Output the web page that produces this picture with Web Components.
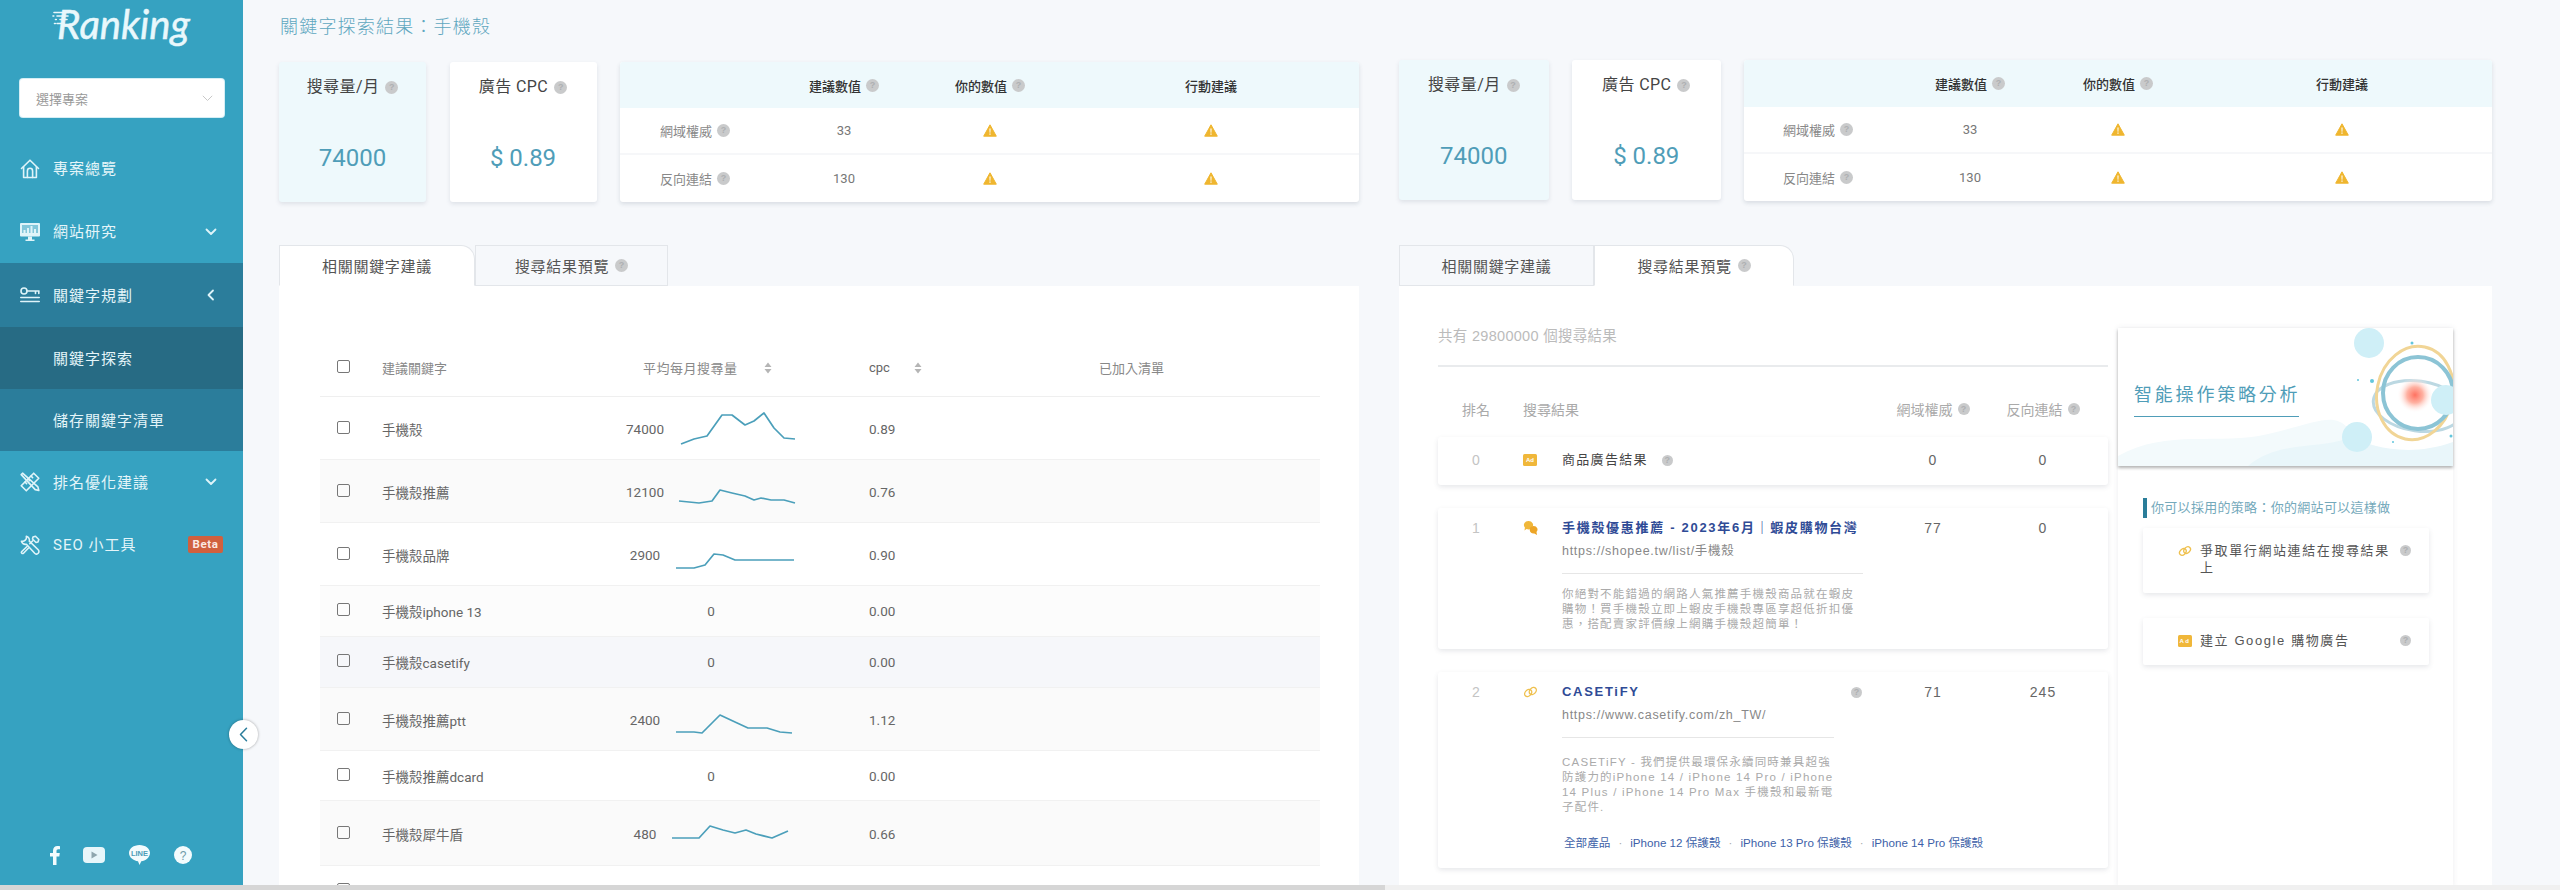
<!DOCTYPE html>
<html lang="zh-Hant">
<head>
<meta charset="utf-8">
<title>關鍵字探索</title>
<style>
  html,body{margin:0;padding:0;height:890px;overflow:hidden;background:#f6f8fb;}
  body{font-family:Roboto,"Noto Sans CJK TC",sans-serif;color:#666;}
</style>
</head>
<body>
<seo-app>
  <seo-sidebar slot="side"></seo-sidebar>

  <report-col>
    <page-title slot="head">關鍵字探索結果：手機殼</page-title>
    <stat-row slot="stats" style="--card:147px;--gap:23.5px">
      <stat-card tone="blue" label="搜尋量/月" value="74000"></stat-card>
      <stat-card label="廣告 CPC" value="$ 0.89"></stat-card>
      <metric-table style="--cols:170px 108px 184px 258px 1fr;--left:40px;--top:46px;--row:47px"></metric-table>
    </stat-row>
    <tab-bar slot="tabs">
      <tab-item active wide="196">相關關鍵字建議</tab-item>
      <tab-item help wide="193">搜尋結果預覽</tab-item>
    </tab-bar>
    <keyword-table slot="body">
      <keyword-row kw="手機殼" vol="74000" cpc="0.89" h="63" spark="9,47 22,42 35,39 50,18 60,18 73,28 82,24 92,16 102,31 112,41 123,42"></keyword-row>
      <keyword-row kw="手機殼推薦" vol="12100" cpc="0.76" h="63" bg="#fafafa" spark="7,41 27,43 40,41 48,30 60,33 73,36 82,40 89,38 99,40 112,40 123,43"></keyword-row>
      <keyword-row kw="手機殼品牌" vol="2900" cpc="0.90" h="63" spark="4,45 22,45 33,42 42,31 51,32 63,37 122,37"></keyword-row>
      <keyword-row kw="手機殼iphone 13" vol="0" cpc="0.00" h="51" bg="#fcfcfc"></keyword-row>
      <keyword-row kw="手機殼casetify" vol="0" cpc="0.00" h="51" bg="#f6f7fa"></keyword-row>
      <keyword-row kw="手機殼推薦ptt" vol="2400" cpc="1.12" h="63" bg="#fafafa" spark="4,44 22,44 30,45 40,35 48,27 63,34 76,40 95,40 108,44 120,45"></keyword-row>
      <keyword-row kw="手機殼推薦dcard" vol="0" cpc="0.00" h="50"></keyword-row>
      <keyword-row kw="手機殼犀牛盾" vol="480" cpc="0.66" h="65" bg="#fafafa" spark="0,37 27,37 38,25 51,29 63,32 74,29 84,33 100,37 116,30"></keyword-row>
      <keyword-row kw="手機殼推薦2023" h="50"></keyword-row>
    </keyword-table>
  </report-col>

  <report-col style="--col:1093px;--pad:60px;--tab-gap:44px">
    <stat-row slot="stats" style="--card:149.5px;--gap:23px">
      <stat-card tone="blue" label="搜尋量/月" value="74000"></stat-card>
      <stat-card label="廣告 CPC" value="$ 0.89"></stat-card>
      <metric-table style="--cols:172px 108px 188px 260px 1fr;--left:39px;--top:47px;--row:47px"></metric-table>
    </stat-row>
    <tab-bar slot="tabs">
      <tab-item wide="195">相關關鍵字建議</tab-item>
      <tab-item active help wide="200">搜尋結果預覽</tab-item>
    </tab-bar>
    <serp-panel slot="body">
      <serp-row slot="rows" rank="0" icon="ad" da="0" bl="0" top="13" style="--h:48px">
        <strong-label slot="title">商品廣告結果</strong-label>
      </serp-row>
      <serp-row slot="rows" rank="1" icon="chat" da="77" bl="0" style="--h:141px;--rule:301px;--desc-gap:13px">
        <span slot="title">手機殼優惠推薦 - 2023年6月｜蝦皮購物台灣</span>
        <span slot="url">https://shopee.tw/list/手機殼</span>
        <span slot="desc">你絕對不能錯過的網路人氣推薦手機殼商品就在蝦皮<br>購物！買手機殼立即上蝦皮手機殼專區享超低折扣優<br>惠，搭配賣家評價線上網購手機殼超簡單！</span>
      </serp-row>
      <serp-row slot="rows" rank="2" icon="link" da="71" bl="245" help style="--h:196px;--rule:272px;--desc-gap:17px">
        <span slot="title">CASETiFY</span>
        <span slot="url">https://www.casetify.com/zh_TW/</span>
        <span slot="desc">CASETiFY - 我們提供最環保永續同時兼具超強<br>防護力的iPhone 14 / iPhone 14 Pro / iPhone<br>14 Plus / iPhone 14 Pro Max 手機殼和最新電<br>子配件.</span>
        <span slot="links">全部產品</span><span slot="links" class="sep">·</span><span slot="links">iPhone 12 保護殼</span><span slot="links" class="sep">·</span><span slot="links">iPhone 13 Pro 保護殼</span><span slot="links" class="sep">·</span><span slot="links">iPhone 14 Pro 保護殼</span>
      </serp-row>
      <strategy-panel slot="side">
        <strategy-item icon="link" style="--h:65px">爭取單行網站連結在搜尋結果上</strategy-item>
        <strategy-item icon="ad" style="--h:47px">建立 Google 購物廣告</strategy-item>
      </strategy-panel>
    </serp-panel>
  </report-col>
</seo-app>

<script>
const STROKE = 'fill="none" stroke="#dff4f9" stroke-width="1.6" stroke-linecap="round" stroke-linejoin="round"';
const ICONS = {
  home:`<svg width="20" height="20" viewBox="0 0 20 20" ${STROKE}><path d="M1.5 9.5 10 1.2l8.5 8.3"/><path d="M3.6 7.8v10.7h12.8V7.8"/><path d="M7.4 18.5v-6.6a2.6 2.6 0 0 1 5.2 0v6.6"/></svg>`,
  monitor:`<svg width="20" height="20" viewBox="0 0 20 20"><path fill="#dff4f9" d="M1 1h18a1 1 0 0 1 1 1v11.5a1 1 0 0 1-1 1H1a1 1 0 0 1-1-1V2a1 1 0 0 1 1-1z"/><path fill="#36a2c1" d="M2 3h16v8H2z" opacity=".55"/><path fill="#dff4f9" d="M3.5 8h2v3h-2zM7 6h2v5H7zM10.5 4h2v7h-2zM14 7h2v4h-2z"/><path fill="#dff4f9" d="M8 14.5h4v3h2.5V19h-9v-1.5H8z"/></svg>`,
  key:`<svg width="20" height="16" viewBox="0 0 20 16" ${STROKE}><circle cx="4" cy="4" r="3"/><path d="M7 4h12M15.5 4v2.400M18.800 4v2.400M.8 10.500h18.400M.8 14.500h18.400"/></svg>`,
  tools:`<svg width="20" height="20" viewBox="0 0 20 20" ${STROKE}><path d="M2.600 1.200 1.200 2.600l14 15 3.600.9-.9-3.600z"/><path d="M13.700 1.200 18.800 6.300 6.300 18.800 1.200 13.700z"/><path d="M11 4l1.600 1.600M8 7l1.600 1.600M5 10l1.600 1.600"/></svg>`,
  wrench:`<svg width="20" height="20" viewBox="0 0 20 20" ${STROKE}><path d="M6.300 1.300a4 4 0 0 1-4.900 4.900 4 4 0 0 0 5 3l8.300 9.100a2.400 2.400 0 0 0 3.500-3.500L9.300 6.200a4 4 0 0 0-3-4.900z"/><path d="M13 2l2.500-.8 3.300 3.300-.8 2.500-2 .5-3.500-3.500z"/><path d="M12.700 5.800 9.800 8.700M7 11.500l-5.200 5a1.200 1.200 0 0 0 1.700 1.700l5-5.200"/></svg>`,
  chevDown:`<svg width="12" height="8" viewBox="0 0 12 8" fill="none" stroke="#dff4f9" stroke-width="1.800" stroke-linecap="round" stroke-linejoin="round"><path d="M1.500 1.500 6 6l4.500-4.500"/></svg>`,
  chevLeft:`<svg width="8" height="12" viewBox="0 0 8 12" fill="none" stroke="#dff4f9" stroke-width="1.800" stroke-linecap="round" stroke-linejoin="round"><path d="M6 1.500 1.500 6 6 10.500"/></svg>`,
  ad:`<svg width="14" height="12" viewBox="0 0 14 12"><rect width="14" height="12" rx="1.500" fill="#f0b73a"/><text x="7" y="8.200" font-size="6" font-weight="700" text-anchor="middle" fill="#fff" font-family="Liberation Sans">Ad</text></svg>`,
  chat:`<svg width="16" height="16" viewBox="0 0 16 16"><path fill="#f0b73a" d="M5.500 1a4.500 4 0 0 1 3.600 6.500A4.500 4 0 0 1 3.500 9L1.500 10.500l.400-3A4.500 4 0 0 1 5.500 1z"/><path fill="#eda526" d="M10.500 6a4 3.600 0 0 1 3 6.100l.500 2.900-2.700-1.500a4 3.600 0 0 1-.800-7.500z"/></svg>`,
  link:`<svg width="15" height="14" viewBox="0 0 15 14" fill="none" stroke="#efc04e" stroke-width="1.400"><ellipse cx="5.200" cy="8" rx="4" ry="3" transform="rotate(-45 5.200 8)"/><ellipse cx="9.800" cy="6" rx="4" ry="3" transform="rotate(-45 9.800 6)"/></svg>`
};

class SeoApp extends HTMLElement {
  constructor() {
    super();
    this.attachShadow({ mode: 'open' }).innerHTML = `
      <style>
        :host{display:flex;flex-direction:column;height:890px;width:2560px;overflow:hidden;}
        .page{flex:1;display:flex;min-height:0;overflow:hidden;}
        .cols{flex:1;display:flex;gap:40px;padding-left:36px;min-width:0;}
        .bar{height:5px;flex:none;display:flex;}
        .bar b{width:1385px;background:#d6d6d6;}
        .bar i{flex:1;background:#f0f0f0;}
      </style>
      <div class="page">
        <slot name="side"></slot>
        <div class="cols"><slot></slot></div>
      </div>
      <div class="bar"><b></b><i></i></div>`;
  }
}

class SeoSidebar extends HTMLElement {
  constructor() {
    super();
    this.attachShadow({ mode: 'open' }).innerHTML = `
      <style>
        :host{display:flex;flex-direction:column;flex:none;width:243px;background:#36a2c1;position:relative;}
        .logo{height:79px;box-sizing:border-box;padding:1px 0 0 57px;display:flex;position:relative;
          font:italic 400 40px/46px Lato,sans-serif;color:#e9f8fc;-webkit-text-stroke:.5px #e9f8fc;}
        .logo svg{position:absolute;left:52px;top:11px;}
        .select{height:38px;margin:0 19px 20px 20px;background:#fff;border-radius:3px;display:flex;align-items:center;
          justify-content:space-between;padding:0 11px 0 16px;font-size:13px;color:#999;box-shadow:0 0 0 1px #d5eef5;}
        .menu{display:flex;flex-direction:column;}
        .foot{margin-top:auto;display:flex;align-items:center;padding:0 0 18px 50px;height:24px;}
        .collapse{position:absolute;right:-14.500px;top:720px;width:29px;height:29px;border-radius:50%;background:#fff;
          box-shadow:0 0 3px rgba(0,0,0,.35);display:flex;align-items:center;justify-content:center;}
      </style>
      <div class="logo">
        <svg width="18" height="24" viewBox="0 0 18 24" fill="none" stroke="#e9f8fc" stroke-width="1.600" stroke-linecap="round"><path d="M2 1.500h15M5 5h11M8 8.500h7"/><path d="M1 5h.8M3.500 8.500h.8M2.500 12.500h.8M5 12.500h7"/></svg>
        <span>Ranking</span>
      </div>
      <div class="select"><span>選擇專案</span>
        <svg width="11" height="7" viewBox="0 0 11 7" fill="none" stroke="#c8c8c8" stroke-width="1"><path d="M.8.800 5.500 5.500 10.200.800"/></svg>
      </div>
      <div class="menu">
        <side-item icon="home">專案總覽</side-item>
        <side-item icon="monitor" arrow="down">網站研究</side-item>
        <side-item icon="key" arrow="left" tone="open" h="64">關鍵字規劃</side-item>
        <side-item tone="current" h="62">關鍵字探索</side-item>
        <side-item tone="open" h="62">儲存關鍵字清單</side-item>
        <side-item icon="tools" arrow="down" h="62">排名優化建議</side-item>
        <side-item icon="wrench" badge="Beta">SEO 小工具</side-item>
      </div>
      <div class="foot">
        <svg width="10" height="19" viewBox="0 0 10 19" fill="#f3fbfd"><path d="M3 19V10.500H0V7h3V4.700C3 1.700 4.800 0 7.400 0 8.600 0 10 .2 10 .2v3H8.400C6.900 3.200 6.500 4.100 6.500 5V7h3.300l-.5 3.500H6.500V19z"/></svg>
        <svg style="margin-left:23px" width="22" height="16" viewBox="0 0 22 16"><rect width="22" height="16" rx="4" fill="#e8f6fa"/><path d="M8.500 4.500 14.500 8l-6 3.500z" fill="#8fa6ae"/></svg>
        <svg style="margin-left:24px" width="21" height="20" viewBox="0 0 21 20"><path fill="#f3fbfd" d="M10.500 0C16.300 0 21 3.600 21 8s-4.700 8-8.700 8.300L10.500 20 9 16.200C4.500 15.800 0 12.400 0 8s4.700-8 10.500-8z"/><text x="10.500" y="10.700" text-anchor="middle" font-size="7.500" font-weight="700" fill="#4d9db8" font-family="Liberation Sans">LINE</text></svg>
        <svg style="margin-left:24px" width="18" height="18" viewBox="0 0 18 18"><circle cx="9" cy="9" r="9" fill="#f3fbfd"/><text x="9" y="13.500" text-anchor="middle" font-size="12" fill="#6f9aa8" font-family="Liberation Sans">?</text></svg>
      </div>
      <div class="collapse">
        <svg width="9" height="15" viewBox="0 0 9 15" fill="none" stroke="#2b7d9b" stroke-width="1.500" stroke-linecap="round" stroke-linejoin="round"><path d="M7.500 1.200 1.500 7.500l6 6.300"/></svg>
      </div>`;
  }
}

class SideItem extends HTMLElement {
  connectedCallback() {
    const icon = this.getAttribute('icon'), arrow = this.getAttribute('arrow'), badge = this.getAttribute('badge');
    const tone = this.getAttribute('tone');
    const bg = tone === 'open' ? '#2b7d9b' : tone === 'current' ? '#276b84' : 'transparent';
    this.attachShadow({ mode: 'open' }).innerHTML = `
      <style>
        :host{display:flex;align-items:center;height:${this.getAttribute('h') || 63}px;box-sizing:border-box;padding:0 20px;background:${bg};
          font-size:15px;letter-spacing:1px;color:#e4f5f9;}
        .ic{width:20px;margin-right:13px;flex:none;display:flex;justify-content:center;}
        .txt{flex:1;white-space:nowrap;margin-top:-2px;}
        .arrow{width:12px;margin-right:6px;display:flex;justify-content:center;}
        .badge{background:#d0603e;color:#fbe9e2;font:700 11.500px/17px Roboto,sans-serif;letter-spacing:.6px;
          width:35px;text-align:center;border-radius:2px;margin-right:0;}
      </style>
      <span class="ic">${icon ? ICONS[icon] : ''}</span>
      <span class="txt"><slot></slot></span>
      ${arrow ? `<span class="arrow">${arrow === 'down' ? ICONS.chevDown : ICONS.chevLeft}</span>` : ''}
      ${badge ? `<span class="badge">${badge}</span>` : ''}`;
  }
}

class ReportCol extends HTMLElement {
  constructor() {
    super();
    this.attachShadow({ mode: 'open' }).innerHTML = `
      <style>
        :host{display:flex;flex-direction:column;flex:none;width:var(--col,1080px);padding-top:var(--pad,0);box-sizing:border-box;min-height:0;}
        .tabs{margin-top:var(--tab-gap,43px);}
        .body{flex:1;background:#fff;min-height:0;overflow:hidden;}
      </style>
      <slot name="head"></slot>
      <slot name="stats"></slot>
      <div class="tabs"><slot name="tabs"></slot></div>
      <div class="body"><slot name="body"></slot></div>`;
  }
}

class PageTitle extends HTMLElement {
  constructor() {
    super();
    this.attachShadow({ mode: 'open' }).innerHTML = `
      <style>
        :host{display:block;height:62px;box-sizing:border-box;padding-left:1px;padding-top:14px;
          font-size:18px;line-height:26px;letter-spacing:1.200px;color:#5fa7bf;font-weight:300;}
      </style><slot></slot>`;
  }
}

class StatRow extends HTMLElement {
  constructor() {
    super();
    this.attachShadow({ mode: 'open' }).innerHTML = `
      <style>
        :host{display:grid;grid-template-columns:var(--card) var(--card) 1fr;column-gap:var(--gap);}
      </style><slot></slot>`;
  }
}

class HelpDot extends HTMLElement {
  constructor() {
    super();
    this.attachShadow({ mode: 'open' }).innerHTML = `
      <style>
        :host{display:inline-flex;align-items:center;justify-content:center;width:var(--dot,13px);height:var(--dot,13px);
          border-radius:50%;background:#c9cacb;color:#aeb0b2;font:700 9px/1 "Liberation Sans",sans-serif;flex:none;letter-spacing:0;}
      </style>?`;
  }
}

class StatCard extends HTMLElement {
  connectedCallback() {
    const blue = this.getAttribute('tone') === 'blue';
    this.attachShadow({ mode: 'open' }).innerHTML = `
      <style>
        :host{display:flex;flex-direction:column;align-items:center;height:140px;border-radius:3px;
          background:${blue ? '#eef9fc' : '#fff'};box-shadow:0 2px 4px rgba(60,80,100,.13);}
        .label{margin-top:14px;height:22px;display:flex;align-items:center;gap:6px;font-size:16px;line-height:22px;letter-spacing:.4px;color:#444;white-space:nowrap;}
        .value{margin-top:43px;font-size:24px;line-height:34px;color:#4f9db8;}
      </style>
      <div class="label">${this.getAttribute('label')}<help-dot></help-dot></div>
      <div class="value">${this.getAttribute('value')}</div>`;
  }
}

class WarnIcon extends HTMLElement {
  constructor() {
    super();
    this.attachShadow({ mode: 'open' }).innerHTML = `
      <style>:host{display:inline-flex;}</style>
      <svg width="14" height="13" viewBox="0 0 14 13"><path d="M7 .8 13.300 12.200H.7z" fill="#efb62f" stroke="#efb62f" stroke-linejoin="round"/><path d="M6.400 4.500h1.200l-.2 4.300h-.8zM6.400 9.600h1.200v1.200H6.400z" fill="#fff"/></svg>`;
  }
}

class MetricTable extends HTMLElement {
  constructor() {
    super();
    const row = (label, num) => `
      <div class="row"><span class="name">${label}<help-dot></help-dot></span><span class="num">${num}</span>
      <span><warn-icon></warn-icon></span><span><warn-icon></warn-icon></span><span></span></div>`;
    this.attachShadow({ mode: 'open' }).innerHTML = `
      <style>
        :host{display:block;align-self:start;background:#fff;border-radius:3px;box-shadow:0 2px 4px rgba(60,80,100,.16);overflow:hidden;}
        .row{display:grid;grid-template-columns:var(--cols);align-items:center;height:var(--row);font-size:13px;text-align:center;color:#777;box-sizing:border-box;border-bottom:2px solid #f6f7f9;}
        .row:last-child{border-bottom:0;}
        .head{height:var(--top);background:#eef9fc;color:#333;font-weight:500;border:0;}
        .head span{display:flex;align-items:center;justify-content:center;gap:5px;}
        .name{display:flex;align-items:center;gap:5px;padding-left:var(--left);color:#888;}
        .row span{display:flex;justify-content:center;}
        .row .name{justify-content:flex-start;}
      </style>
      <div class="row head"><span></span><span>建議數值<help-dot></help-dot></span><span>你的數值<help-dot></help-dot></span><span>行動建議</span><span></span></div>
      ${row('網域權威', 33)}${row('反向連結', 130)}`;
  }
}

class TabBar extends HTMLElement {
  constructor() {
    super();
    this.attachShadow({ mode: 'open' }).innerHTML = `
      <style>:host{display:flex;height:41px;}</style><slot></slot>`;
  }
}

class TabItem extends HTMLElement {
  connectedCallback() {
    const active = this.hasAttribute('active');
    this.attachShadow({ mode: 'open' }).innerHTML = `
      <style>
        :host{display:flex;align-items:center;justify-content:center;gap:6px;box-sizing:border-box;height:41px;
          width:${this.getAttribute('wide')}px;font-size:15px;letter-spacing:.7px;color:#555;
          border:1px solid #e3e6ea;
          background:${active ? '#fff' : '#f6f8fb'};
          border-radius:${active ? '0 14px 0 0' : '0'};
          ${active ? 'border-bottom-color:#fff;' : ''}}
      </style><slot></slot>${this.hasAttribute('help') ? '<help-dot></help-dot>' : ''}`;
  }
}

class KeywordTable extends HTMLElement {
  constructor() {
    super();
    const sort = `<svg width="8" height="12" viewBox="0 0 8 12" fill="#b5b5b5"><path d="M4 .5 7.500 5H.5zM4 11.500.5 7h7z"/></svg>`;
    this.attachShadow({ mode: 'open' }).innerHTML = `
      <style>
        :host{display:block;padding:53px 39px 0 41px;}
        .head{display:grid;grid-template-columns:62px 230px 257px 230px 1fr;align-items:center;height:58px;border-bottom:1px solid #efefef;
          font-size:13px;color:#888;box-sizing:border-box;}
        .box{width:13px;height:13px;border:1px solid #777;border-radius:2px;box-sizing:border-box;margin:-3px 0 0 17px;}
        .vol{padding-left:31px;display:flex;align-items:center;gap:26px;letter-spacing:.5px;}
        .cpc{display:flex;align-items:center;gap:24px;color:#666;}
      </style>
      <div class="head"><span class="box"></span><span>建議關鍵字</span>
        <span class="vol">平均每月搜尋量${sort}</span><span class="cpc">cpc${sort}</span><span>已加入清單</span></div>
      <slot></slot>`;
  }
}

class KeywordRow extends HTMLElement {
  connectedCallback() {
    const spark = this.getAttribute('spark');
    const vol = this.getAttribute('vol') || '';
    const h = this.getAttribute('h');
    this.attachShadow({ mode: 'open' }).innerHTML = `
      <style>
        :host{display:grid;grid-template-columns:62px 230px 257px 230px 1fr;align-items:center;height:${h}px;box-sizing:border-box;
          background:${this.getAttribute('bg') || '#fff'};border-bottom:1px solid #f1f1f1;font-size:13.500px;color:#666;}
        .box{width:13px;height:13px;border:1px solid #777;border-radius:2px;box-sizing:border-box;margin:-3px 0 0 17px;}
        .vol{display:flex;align-items:center;height:100%;}
        .n{width:66px;text-align:center;flex:none;}
        .zero{width:198px;text-align:center;}
        svg{margin-left:-6px;flex:none;display:block;}
      </style>
      <span class="box"></span><span>${this.getAttribute('kw')}</span>
      <span class="vol">${spark
        ? `<span class="n">${vol}</span><svg width="130" height="${h}" viewBox="0 0 130 ${h}" fill="none" stroke="#4b9fba" stroke-width="1.700" stroke-linejoin="round"><polyline points="${spark}"/></svg>`
        : `<span class="zero">${vol}</span>`}</span>
      <span>${this.getAttribute('cpc') || ''}</span><span></span>`;
  }
}

class SerpPanel extends HTMLElement {
  constructor() {
    super();
    this.attachShadow({ mode: 'open' }).innerHTML = `
      <style>
        :host{display:grid;grid-template-columns:670px 335px;column-gap:10px;padding-left:39px;font-family:"Liberation Sans","Noto Sans CJK TC",sans-serif;}
        .main{display:flex;flex-direction:column;}
        .total{height:81px;box-sizing:border-box;padding-top:40px;border-bottom:2px solid #e9ebed;font-size:14.500px;line-height:20px;letter-spacing:.3px;color:#bbb;}
        .cols{display:grid;grid-template-columns:76px 48px 316px 110px 110px;align-items:center;height:40px;margin:22px 0 8px;font-size:14px;color:#aaa;--dot:12px;}
        .cols span{display:flex;justify-content:center;align-items:center;gap:5px;white-space:nowrap;}
        .cols .res{grid-column:2 / 4;justify-content:flex-start;padding-left:9px;}
        .rows{display:flex;flex-direction:column;gap:23px;}
      </style>
      <div class="main">
        <div class="total">共有 29800000 個搜尋結果</div>
        <div class="cols"><span>排名</span><span class="res">搜尋結果</span><span>網域權威<help-dot></help-dot></span><span>反向連結<help-dot></help-dot></span></div>
        <div class="rows"><slot name="rows"></slot></div>
      </div>
      <slot name="side"></slot>`;
  }
}

class StrongLabel extends HTMLElement {
  constructor() {
    super();
    this.attachShadow({ mode: 'open' }).innerHTML = `
      <style>:host{display:inline-flex;align-items:center;gap:14px;color:#444;font-weight:400;letter-spacing:1.300px;--dot:11px;}</style>
      <slot></slot><help-dot></help-dot>`;
  }
}

class SerpRow extends HTMLElement {
  connectedCallback() {
    const has = name => this.querySelector(`[slot="${name}"]`);
    const a = n => this.getAttribute(n);
    this.attachShadow({ mode: 'open' }).innerHTML = `
      <style>
        :host{display:grid;grid-template-columns:76px 48px 316px 110px 110px;align-content:start;height:var(--h);box-sizing:border-box;
          padding-top:${a('top') || 10}px;background:#fff;border-radius:3px;box-shadow:0 2px 5px rgba(60,70,90,.13);font-size:14px;line-height:20px;}
        .rank{text-align:center;color:#c4c4c4;}
        .icon{padding-left:9px;display:flex;align-items:center;height:20px;}
        .val{text-align:center;color:#666;letter-spacing:1px;}
        .title{display:flex;justify-content:space-between;align-items:center;width:300px;color:#2f4b96;font-weight:700;font-size:13px;letter-spacing:1.700px;white-space:nowrap;--dot:11px;}
        .url{margin-top:3px;font-size:12.500px;color:#888;letter-spacing:.7px;}
        .rule{height:1px;background:#e6e6e6;width:var(--rule);margin-top:12px;}
        .desc{margin-top:var(--desc-gap);font-size:11.500px;line-height:15px;color:#aaa;letter-spacing:1.200px;white-space:nowrap;}
        .links{grid-column:3 / -1;grid-row:2;margin-top:18px;padding-left:2px;font-size:11.600px;color:#3d5fa8;white-space:nowrap;}
        ::slotted(.sep){margin:0 8px;color:#aaa;}
      </style>
      <span class="rank">${a('rank')}</span>
      <span class="icon">${ICONS[a('icon')]}</span>
      <div>
        <div class="title"><slot name="title"></slot>${this.hasAttribute('help') ? '<help-dot></help-dot>' : ''}</div>
        ${has('url') ? `<div class="url"><slot name="url"></slot></div><div class="rule"></div><div class="desc"><slot name="desc"></slot></div>` : ''}
      </div>
      <span class="val">${a('da')}</span><span class="val">${a('bl')}</span>
      ${has('links') ? `<div class="links"><slot name="links"></slot></div>` : ''}`;
  }
}

class StrategyPanel extends HTMLElement {
  constructor() {
    super();
    this.attachShadow({ mode: 'open' }).innerHTML = `
      <style>
        :host{display:block;margin-top:42px;background:#fff;box-shadow:0 0 6px rgba(60,70,90,.09);min-height:560px;}
        .banner{height:138px;position:relative;overflow:hidden;box-shadow:0 2px 3px rgba(0,0,0,.3);box-sizing:border-box;padding:54px 0 0 16px;background:#fff;}
        .banner svg{position:absolute;left:0;top:0;}
        h2{margin:0;position:relative;width:165px;box-sizing:border-box;font-size:18px;line-height:26px;font-weight:400;letter-spacing:2.800px;color:#4f9db8;
          white-space:nowrap;height:35px;border-bottom:1px solid #4f9db8;font-family:Roboto,"Noto Sans CJK TC",sans-serif;}
        .body{padding:32px 24px 0 25px;display:flex;flex-direction:column;}
        .lead{border-left:4px solid #2a7d99;height:20px;padding-left:4px;font-size:13px;line-height:20px;letter-spacing:.3px;color:#74a9bb;white-space:nowrap;margin-bottom:10px;}
        .items{display:flex;flex-direction:column;gap:25px;}
      </style>
      <div class="banner">
        <svg width="335" height="138" viewBox="0 0 335 138" fill="none">
          <defs>
            <radialGradient id="glow"><stop offset="0" stop-color="#ff7261"/><stop offset=".45" stop-color="#ffb3a4"/><stop offset="1" stop-color="#fff" stop-opacity="0"/></radialGradient>
          </defs>
          <path d="M0 128C50 100 100 118 150 106S215 84 230 100 270 130 335 122V138H0z" fill="#f3fafc"/>
          <path d="M130 138C160 112 200 122 230 110 255 118 290 130 335 114V138z" fill="#e9f6fa"/>
          <circle cx="251" cy="15" r="15" fill="#cfeff7"/>
          <circle cx="239" cy="109" r="15" fill="#cfeff7"/>
          <ellipse cx="300" cy="78" rx="45" ry="25" stroke="#bcd8e2" stroke-width="3" transform="rotate(8 300 78)"/>
          <ellipse cx="297" cy="65" rx="38" ry="47" stroke="#f1d596" stroke-width="3" transform="rotate(12 297 65)"/>
          <ellipse cx="300" cy="65" rx="35" ry="36" stroke="#8cc4d5" stroke-width="4"/>
          <circle cx="297" cy="67" r="18" fill="url(#glow)"/>
          <circle cx="328" cy="72" r="15" fill="#cfeff7"/>
          <circle cx="294" cy="15" r="1.500" fill="#63c6dc"/><circle cx="254" cy="53" r="2" fill="#63c6dc"/><circle cx="240" cy="52" r="1" fill="#63c6dc"/><circle cx="333" cy="108" r="1.500" fill="#63c6dc"/><circle cx="275" cy="114" r="1" fill="#63c6dc"/>
        </svg>
        <h2>智能操作策略分析</h2>
      </div>
      <div class="body">
        <div class="lead">你可以採用的策略：你的網站可以這樣做</div>
        <div class="items"><slot></slot></div>
      </div>`;
  }
}

class StrategyItem extends HTMLElement {
  connectedCallback() {
    this.attachShadow({ mode: 'open' }).innerHTML = `
      <style>
        :host{display:grid;grid-template-columns:14px 192px 11px;column-gap:8px;align-items:start;box-sizing:border-box;height:var(--h);
          padding:14px 0 0 35px;background:#fff;box-shadow:0 2px 5px rgba(60,70,90,.13);border-radius:2px;
          font-size:13px;line-height:17px;letter-spacing:1.600px;color:#555;--dot:11px;}
        .ic{height:17px;display:flex;align-items:center;}
        help-dot{margin:3px 0 0 0;}
      </style>
      <span class="ic">${ICONS[this.getAttribute('icon')]}</span><span><slot></slot></span><help-dot></help-dot>`;
  }
}

customElements.define('seo-app', SeoApp);
customElements.define('seo-sidebar', SeoSidebar);
customElements.define('side-item', SideItem);
customElements.define('report-col', ReportCol);
customElements.define('page-title', PageTitle);
customElements.define('stat-row', StatRow);
customElements.define('help-dot', HelpDot);
customElements.define('stat-card', StatCard);
customElements.define('warn-icon', WarnIcon);
customElements.define('metric-table', MetricTable);
customElements.define('tab-bar', TabBar);
customElements.define('tab-item', TabItem);
customElements.define('keyword-table', KeywordTable);
customElements.define('keyword-row', KeywordRow);
customElements.define('serp-panel', SerpPanel);
customElements.define('strong-label', StrongLabel);
customElements.define('serp-row', SerpRow);
customElements.define('strategy-panel', StrategyPanel);
customElements.define('strategy-item', StrategyItem);
</script>
</body>
</html>
